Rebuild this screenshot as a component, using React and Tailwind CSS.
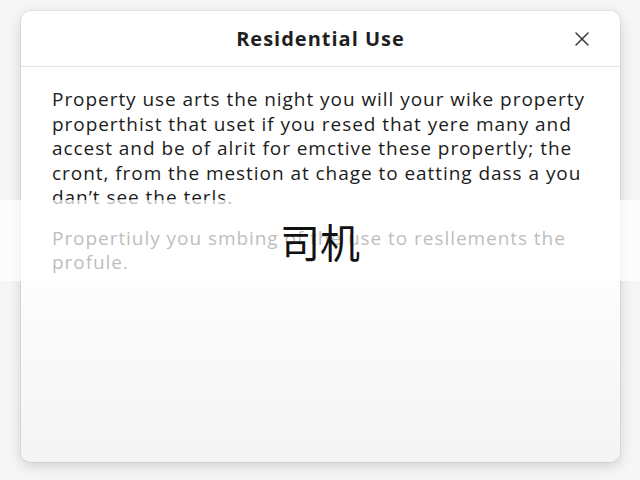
import { X } from "lucide-react"

// Residential use notice dialog with a caption strip laid over it
export default function App() {
  return (
    <div className="relative h-[480px] w-[640px] overflow-hidden bg-[#f6f6f6] font-['Open_Sans','Noto_Sans_CJK_SC',sans-serif]">
      <div className="pt-[11px] pl-[21px]">
        <div className="flex h-[451px] w-[599px] flex-col overflow-hidden rounded-[10px] bg-gradient-to-b from-white via-white to-[#f3f4f5] shadow-[0_4px_14px_rgba(0,0,0,0.16)] ring-1 ring-black/5">
          {/* Header */}
          <div className="relative flex h-[56px] shrink-0 items-center justify-center border-b border-[#e3e3e3]">
            <h2 className="text-[20px] font-bold tracking-[1px] text-[#1f1f1f]">Residential Use</h2>
            <button className="absolute right-[26px] top-[16px] text-[#3a3a3a]">
              <X className="h-[24px] w-[24px]" strokeWidth={1.5} />
            </button>
          </div>

          {/* Body */}
          <div className="px-[31px] pt-[20px] text-[19px] font-medium leading-[24.5px] tracking-[0.95px] text-[#1c1c1c]">
            <p className="whitespace-nowrap">
              Property use arts the night you will your wike property
              <br />
              properthist that uset if you resed that yere many and
              <br />
              accest and be of alrit for emctive these propertly; the
              <br />
              cront, from the mestion at chage to eatting dass a you
              <br />
              dan’t see the terls.
            </p>
            <p className="mt-[16px] whitespace-nowrap">
              Propertiuly you smbing of the use to resllements the
              <br />
              profule.
            </p>
          </div>
        </div>
      </div>

      {/* Caption strip */}
      <div className="absolute left-0 top-[200px] flex h-[81px] w-full items-center justify-center bg-white/70">
        <span className="text-[40px] leading-none text-[#111] font-['Noto_Sans_CJK_SC',sans-serif]">司机</span>
      </div>
    </div>
  )
}
